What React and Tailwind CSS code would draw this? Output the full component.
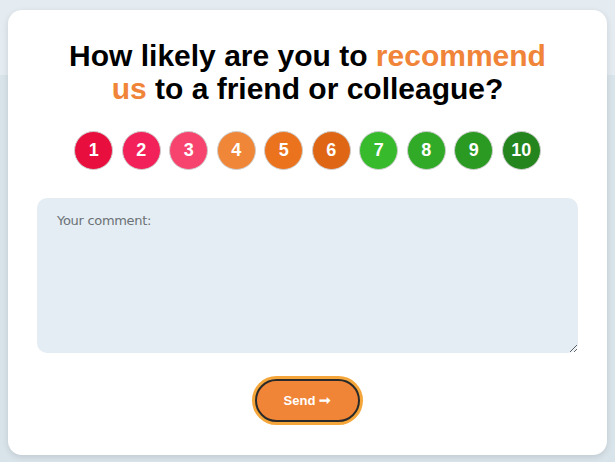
import React, { useState } from 'react';

const scores = [
  { n: 1, bg: 'bg-[#e80f3e]' },
  { n: 2, bg: 'bg-[#f2215a]' },
  { n: 3, bg: 'bg-[#f6446f]' },
  { n: 4, bg: 'bg-[#f08638]' },
  { n: 5, bg: 'bg-[#ec731d]' },
  { n: 6, bg: 'bg-[#df6614]' },
  { n: 7, bg: 'bg-[#37bb2d]' },
  { n: 8, bg: 'bg-[#31aa27]' },
  { n: 9, bg: 'bg-[#2b9a22]' },
  { n: 10, bg: 'bg-[#24851e]' },
];

const App = () => {
  const [score, setScore] = useState(null);
  const [comment, setComment] = useState('');

  return (
    <div className="min-h-[462px] bg-[linear-gradient(to_bottom,#e4ecf2_75px,#d9e4ea_75px)] pt-[10px] px-2 pb-[7px] font-['Liberation_Sans',Arial,sans-serif]">
      <div className="bg-white rounded-[14px] shadow-[0_2px_6px_rgba(0,0,0,0.12)] h-[445px] flex flex-col items-center pt-[29px] px-[29px]">
        {/* Heading */}
        <h1 className="text-[30px] leading-[33px] font-bold text-black text-center">
          <span className="block">
            How likely are you to <span className="text-[#f08438]">recommend</span>
          </span>
          <span className="block">
            <span className="text-[#f08438]">us</span> to a friend or colleague?
          </span>
        </h1>

        {/* Score picker */}
        <div className="flex gap-[8.5px] mt-[26px]">
          {scores.map((s) => (
            <button
              key={s.n}
              onClick={() => setScore(s.n)}
              className={`w-[39px] h-[39px] rounded-full border border-[#cfcfcf] ${s.bg} text-white font-bold text-[18px] flex items-center justify-center ${score === s.n ? 'scale-110' : ''}`}
            >
              {s.n}
            </button>
          ))}
        </div>

        {/* Comment box */}
        <textarea
          value={comment}
          onChange={(e) => setComment(e.target.value)}
          placeholder="Your comment:"
          className="mt-[28px] w-[541px] h-[155px] bg-[#e4edf3] rounded-[10px] px-5 py-[13px] text-[13px] text-gray-700 placeholder:text-[#6b7176] outline-none resize-y font-['DejaVu_Sans',sans-serif] tracking-[-0.3px]"
        />

        <button className="mt-[26px] w-[105px] h-[43px] rounded-full bg-[#f08537] border-2 border-[#2a2a2a] ring-[3px] ring-[#f4a63b] text-white font-bold text-[13px] flex items-center justify-center gap-1">
          Send <span className="text-[14px]">➞</span>
        </button>
      </div>
    </div>
  );
};

export default App;
